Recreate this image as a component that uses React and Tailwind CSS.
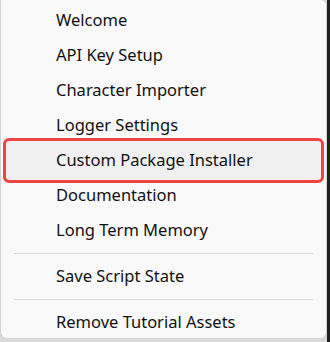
import React from 'react';

const groups = [
  ['Welcome', 'API Key Setup', 'Character Importer', 'Logger Settings', 'Custom Package Installer', 'Documentation', 'Long Term Memory'],
  ['Save Script State'],
  ['Remove Tutorial Assets'],
];

function MenuItem({ label }) {
  const active = label === 'Custom Package Installer';
  if (active) {
    return (
      <div className="h-[45px] -my-[5px] flex items-center rounded-[6px] border-[3px] border-[#ef4444] bg-[#f0f0f0] pl-[50px]">
        {label}
      </div>
    );
  }
  return <div className="h-[35px] flex items-center pl-[53px]">{label}</div>;
}

export default function App() {
  return (
    <div className="w-[330px] h-[342px] bg-[#d9d9d9] flex" style={{ fontFamily: '"Noto Sans", "Open Sans", sans-serif' }}>
      <div className="w-[327px] h-[339px] rounded-b-[7px] rounded-tr-[6px] border border-t-0 border-[#d4d4d4] bg-[#f9f9f9] pt-[3px] px-[2px] text-[16.5px] text-[#111111]">
        {groups.map((items, gi) => (
          <div key={gi}>
            {gi > 0 && (
              <div className="py-[5px] px-[11px]">
                <div className="h-px bg-[#d8d8d8]"></div>
              </div>
            )}
            {items.map((label) => (
              <MenuItem key={label} label={label} />
            ))}
          </div>
        ))}
      </div>
      <div className="w-[3px] h-full bg-[#1f1f1f]"></div>
    </div>
  );
}
